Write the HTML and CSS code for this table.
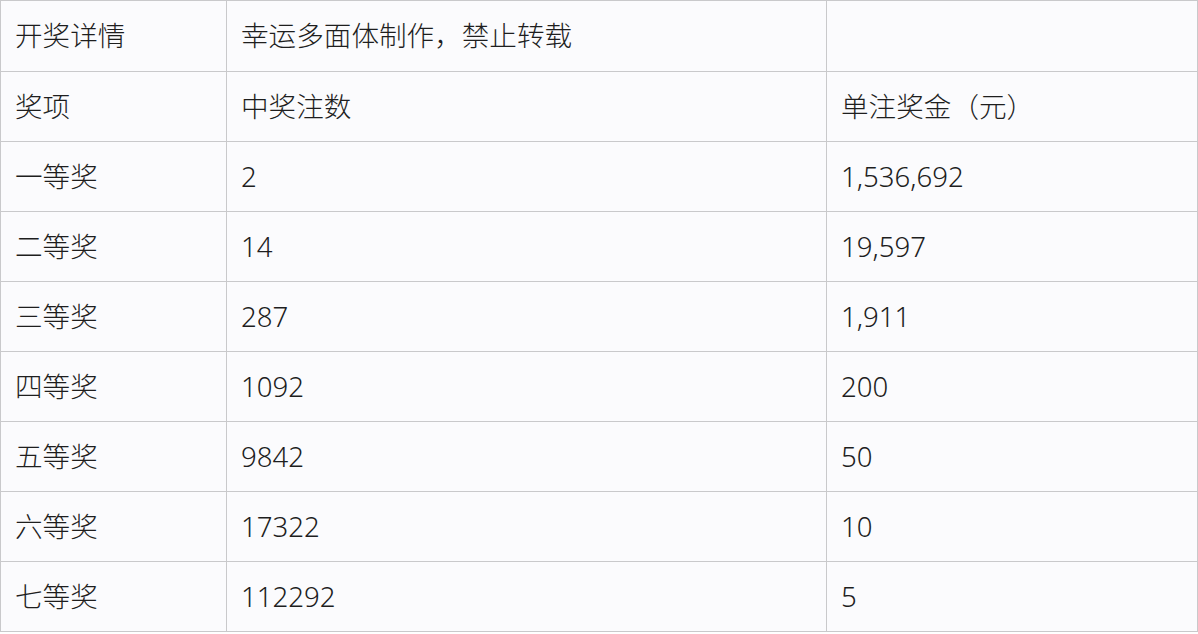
FILE: index.html
```html
<!DOCTYPE html>
<html lang="zh-CN">
<head>
<meta charset="utf-8">
<link rel="stylesheet" href="styles.css">
</head>
<body>
<table class="prize-table">
  <colgroup>
    <col class="c1"><col class="c2"><col class="c3">
  </colgroup>
  <tbody>
    <tr><td>开奖详情</td><td>幸运多面体制作，禁止转载</td><td></td></tr>
    <tr><td>奖项</td><td>中奖注数</td><td>单注奖金（元）</td></tr>
    <tr><td>一等奖</td><td>2</td><td>1,536,692</td></tr>
    <tr><td>二等奖</td><td>14</td><td>19,597</td></tr>
    <tr><td>三等奖</td><td>287</td><td>1,911</td></tr>
    <tr><td>四等奖</td><td>1092</td><td>200</td></tr>
    <tr><td>五等奖</td><td>9842</td><td>50</td></tr>
    <tr><td>六等奖</td><td>17322</td><td>10</td></tr>
    <tr><td>七等奖</td><td>112292</td><td>5</td></tr>
  </tbody>
</table>
</body>
</html>
```
FILE: styles.css
```css
html, body {
  margin: 0;
  padding: 0;
  background: #ffffff;
}
.prize-table {
  border-collapse: collapse;
  table-layout: fixed;
  width: 1197px;
  background: #fbfbfd;
  font-family: "Noto Sans", "Noto Sans CJK SC", sans-serif;
  font-size: 27.6px;
  font-weight: 300;
  color: #1e1e1e;
}
.c1 { width: 226px; }
.c2 { width: 600px; }
.c3 { width: 371px; }
.prize-table td {
  border: 1px solid #c9c9cb;
  height: 70px;
  padding: 0 14px;
  vertical-align: middle;
  white-space: nowrap;
  box-sizing: border-box;
  line-height: 1;
}
.prize-table tr:first-child td {
  height: 71px;
}
```
